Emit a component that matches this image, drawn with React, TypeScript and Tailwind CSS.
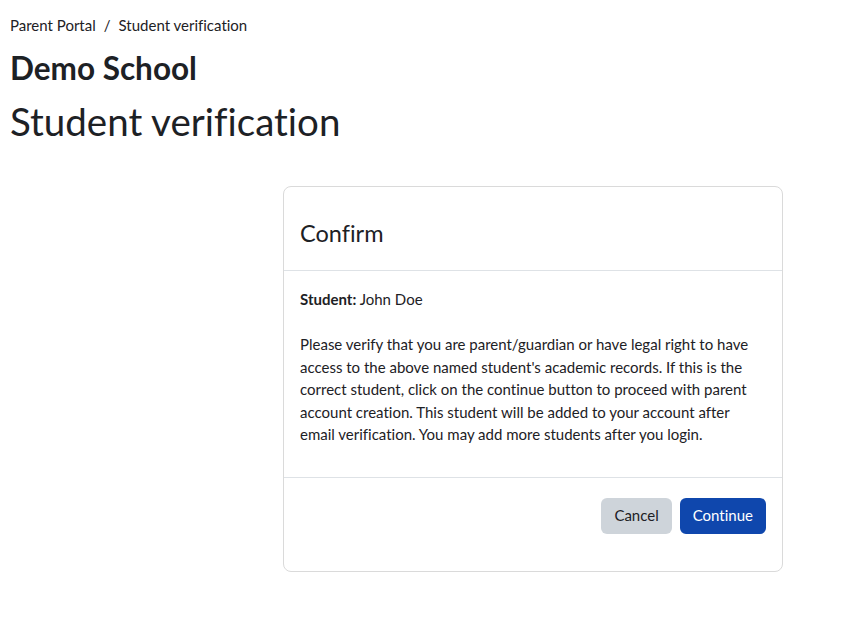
import React from 'react';

const font = { fontFamily: '"Lato", "Liberation Sans", sans-serif' };

const Breadcrumb: React.FC = () => (
  <nav className="flex items-center text-[15px] leading-[22px] text-[#1d2125]">
    <a className="text-[#1d2125]">Parent Portal</a>
    <span className="px-2">/</span>
    <span>Student verification</span>
  </nav>
);

const ConfirmCard: React.FC = () => (
  <div className="ml-[273px] mt-[43px] w-[500px] rounded-lg border border-[#dadada] bg-white">
    <div className="flex h-[84px] items-center border-b border-[#dee2e6] px-4 pt-[11px]">
      <h4 className="text-[23.5px] font-normal text-[#1d2125]">Confirm</h4>
    </div>
    <div className="px-4 pt-[17px] pb-[31px] text-[15px] leading-[22.5px] text-[#1d2125]">
      <p>
        <strong className="font-bold">Student:</strong> John Doe
      </p>
      <br />
      <p>
        Please verify that you are parent/guardian or have legal right to have access to the above named
        student's academic records. If this is the correct student, click on the continue button to proceed
        with parent account creation. This student will be added to your account after email verification.
        You may add more students after you login.
      </p>
    </div>
    <div className="flex justify-end gap-2 border-t border-[#dee2e6] px-4 pt-5 pb-[37px]">
      <button className="h-9 rounded-md bg-[#ced4da] px-[13px] text-[15px] text-[#1d2125]">Cancel</button>
      <button className="h-9 rounded-md bg-[#0f47ad] px-[13px] text-[15px] text-white">Continue</button>
    </div>
  </div>
);

export default function App() {
  return (
    <div
      className="min-h-[620px] bg-white px-[10px] pt-[14px] [font-variant-ligatures:none]"
      style={font}
    >
      <Breadcrumb />
      <h2 className="mt-[15px] text-[31.5px] leading-[34px] font-bold text-[#1d2125]">Demo School</h2>
      <h1 className="mt-[14px] text-[38.5px] leading-[44px] font-normal text-[#1d2125]">Student verification</h1>
      <ConfirmCard />
    </div>
  );
}
